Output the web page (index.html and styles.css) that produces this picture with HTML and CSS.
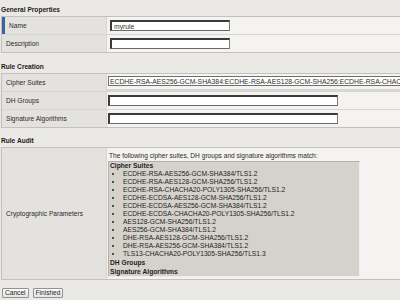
FILE: index.html
```html
<!DOCTYPE html>
<html>
<head>
	<meta charset="UTF-8">
	<title>rule</title>
	<link rel="stylesheet" href="styles.css">
</head>
<body>
	<div class="page">
		<div class="section">
			<div class="section-title">General Properties</div>
			<div class="props">
				<div class="label is-active">Name</div>
				<div class="value"><input class="text text-short" type="text" value="myrule"></div>
				<div class="label">Description</div>
				<div class="value"><input class="text text-short" type="text"></div>
			</div>
		</div>

		<div class="section">
			<div class="section-title">Rule Creation</div>
			<div class="props props-tight">
				<div class="label">Cipher Suites</div>
				<div class="value value-cipher"><input class="text text-cipher" type="text" readonly value="ECDHE-RSA-AES256-GCM-SHA384:ECDHE-RSA-AES128-GCM-SHA256:ECDHE-RSA-CHACHA20-POLY1305-SHA256:ECDHE-ECDSA-AES128-GCM-SHA256"></div>
				<div class="label">DH Groups</div>
				<div class="value"><input class="text text-long" type="text"></div>
				<div class="label">Signature Algorithms</div>
				<div class="value"><input class="text text-long" type="text"></div>
			</div>
		</div>

		<div class="section section-audit">
			<div class="section-title">Rule Audit</div>
			<div class="props props-tight">
				<div class="label label-middle">Cryptographic Parameters</div>
				<div class="value value-audit">
					<div class="audit-intro">The following cipher suites, DH groups and signature algorithms match:</div>
					<div class="audit-box">
						<div class="audit-head">Cipher Suites</div>
						<ul class="audit-list">
							<li>ECDHE-RSA-AES256-GCM-SHA384/TLS1.2</li>
							<li>ECDHE-RSA-AES128-GCM-SHA256/TLS1.2</li>
							<li>ECDHE-RSA-CHACHA20-POLY1305-SHA256/TLS1.2</li>
							<li>ECDHE-ECDSA-AES128-GCM-SHA256/TLS1.2</li>
							<li>ECDHE-ECDSA-AES256-GCM-SHA384/TLS1.2</li>
							<li>ECDHE-ECDSA-CHACHA20-POLY1305-SHA256/TLS1.2</li>
							<li>AES128-GCM-SHA256/TLS1.2</li>
							<li>AES256-GCM-SHA384/TLS1.2</li>
							<li>DHE-RSA-AES128-GCM-SHA256/TLS1.2</li>
							<li>DHE-RSA-AES256-GCM-SHA384/TLS1.2</li>
							<li>TLS13-CHACHA20-POLY1305-SHA256/TLS1.3</li>
						</ul>
						<div class="audit-head audit-head-end">DH Groups</div>
						<div class="audit-head audit-head-end">Signature Algorithms</div>
					</div>
				</div>
			</div>
		</div>

		<div class="buttons">
			<button class="btn" type="button">Cancel</button>
			<button class="btn" type="button">Finished</button>
		</div>
	</div>
</body>
</html>
```

FILE: styles.css
```css
*{
	padding: 0;
	margin: 0;
	box-sizing: border-box;
}
html,body{
	overflow: hidden;
	background: #ebe9e5;
}
body{
	font-family: "Liberation Sans", Arial, sans-serif;
	font-size: 6.6px;
	color: #2a2a2a;
}
.page{
	padding-left: 1px;
}
.section + .section{
	margin-top: 4px;
}
.section-audit{
	margin-top: 3px !important;
}
.section-title{
	height: 16px;
	padding-top: 4px;
	line-height: 12px;
	font-weight: bold;
	color: #1c1c1c;
}
.props{
	width: 720px;
	display: grid;
	grid-template-columns: 104px 1fr;
	gap: 1px;
	background: #d8d6d2;
	border: 1px solid #c3c1bd;
}
.label{
	background: #e4e2de;
	padding: 0 4px;
	line-height: 17px;
}
.label.is-active{
	padding-left: 7px;
	box-shadow: inset 3px 0 0 #3c64a0;
}
.label-middle{
	display: flex;
	align-items: center;
}
.value{
	background: #f4f3f1;
	padding: 3px;
	height: 17px;
}
.props-tight .value{
	padding-left: 1px;
}
.value-cipher{
	height: 15px;
	padding-top: 2px;
}
.text{
	display: block;
	height: 11px;
	font: inherit;
	font-size: 6.8px;
	color: #333;
	background: #fff;
	padding: 0 2px;
	border-style: solid;
	border-width: 2px 1px 1px 2px;
	border-color: #3a3a3a #7a7a7a #6a6a6a #3a3a3a;
	outline: none;
}
.text-short{
	width: 120px;
}
.text-long{
	width: 230px;
}
.text-cipher{
	width: 600px;
	height: 10px;
	padding: 0 1px;
	border: 1px solid #6e6e6e;
	color: #2e2e2e;
}
.value-audit{
	height: auto;
	padding: 2px 0 2px 1px;
}
.audit-intro{
	line-height: 11px;
	padding-left: 1px;
}
.audit-box{
	width: 252px;
	background: #d5d2cb;
	border: 1px solid;
	border-color: #b3b0a9 #efede9 #efede9 #b3b0a9;
	padding-left: 1px;
	line-height: 8px;
	color: #1e1e1e;
}
.audit-head{
	font-weight: bold;
	font-size: 6.7px;
}
.audit-head-end{
	line-height: 9px;
}
.audit-list{
	list-style: disc outside;
	margin-left: 13px;
	font-size: 6.7px;
}
.audit-list li{
	white-space: nowrap;
}
.buttons{
	display: flex;
	gap: 4px;
	margin: 8px 0 0 1px;
}
.btn{
	height: 10px;
	padding: 0 2px;
	font: inherit;
	line-height: 8px;
	color: #222;
	background: linear-gradient(#fdfdfd, #e4e4e4);
	border: 1px solid #929292;
	border-radius: 1px;
}
```
